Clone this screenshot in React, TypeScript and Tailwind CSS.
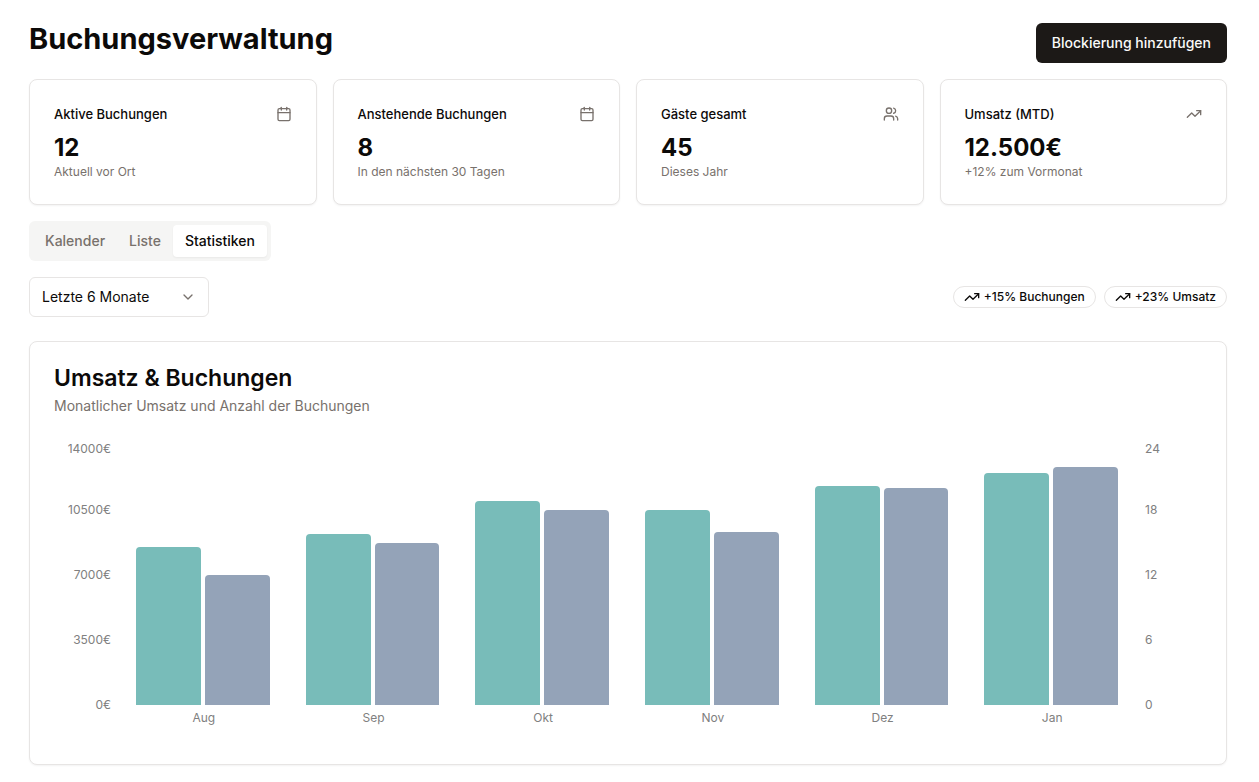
import React, { useState } from 'react';
import { Calendar, ChevronDown, TrendingUp, Users, type LucideIcon } from 'lucide-react';

interface Stat {
  title: string;
  value: string;
  hint: string;
  icon: LucideIcon;
}

interface MonthData {
  month: string;
  revenue: number;
  bookings: number;
}

const stats: Stat[] = [
  { title: 'Aktive Buchungen', value: '12', hint: 'Aktuell vor Ort', icon: Calendar },
  { title: 'Anstehende Buchungen', value: '8', hint: 'In den nächsten 30 Tagen', icon: Calendar },
  { title: 'Gäste gesamt', value: '45', hint: 'Dieses Jahr', icon: Users },
  { title: 'Umsatz (MTD)', value: '12.500€', hint: '+12% zum Vormonat', icon: TrendingUp },
];

const months: MonthData[] = [
  { month: 'Aug', revenue: 8500, bookings: 12 },
  { month: 'Sep', revenue: 9200, bookings: 15 },
  { month: 'Okt', revenue: 11000, bookings: 18 },
  { month: 'Nov', revenue: 10500, bookings: 16 },
  { month: 'Dez', revenue: 11800, bookings: 20 },
  { month: 'Jan', revenue: 12500, bookings: 22 },
];

const MAX_REVENUE = 14000;
const MAX_BOOKINGS = 24;

const tabs = ['Kalender', 'Liste', 'Statistiken'];
const trends = ['+15% Buchungen', '+23% Umsatz'];

const StatCard: React.FC<{ stat: Stat }> = ({ stat }) => {
  const Icon = stat.icon;
  return (
    <div className="rounded-lg border border-[#e7e5e4] bg-white p-6 shadow-xs">
      <div className="flex items-center justify-between pb-2">
        <h3 className="text-[13px] leading-5 font-medium">{stat.title}</h3>
        <Icon className="h-4 w-4 text-[#78716c]" />
      </div>
      <div className="text-2xl font-bold">{stat.value}</div>
      <p className="text-xs text-[#78716c]">{stat.hint}</p>
    </div>
  );
};

const Axis: React.FC<{ ticks: string[]; className: string }> = ({ ticks, className }) => (
  <div className={`flex w-[65px] shrink-0 flex-col pt-px ${className}`}>
    {ticks.map((tick) => (
      <div key={tick} className="h-[65px] first:h-[61px] last:h-4">{tick}</div>
    ))}
  </div>
);

const BookingsChart: React.FC = () => (
  <div className="flex h-[300px] text-xs text-[#808080]">
    <Axis ticks={['14000€', '10500€', '7000€', '3500€', '0€']} className="pr-2 text-right" />
    <div className="flex flex-1 pt-[5px]">
      {months.map((m) => (
        <div key={m.month} className="flex-1">
          <div className="flex h-[260px] items-end gap-1 pr-[19px] pl-[17px]">
            <div
              className="flex-1 rounded-t-[4px] bg-[#78bcb9]"
              style={{ height: `${(m.revenue / MAX_REVENUE) * 100}%` }}
            />
            <div
              className="flex-1 rounded-t-[4px] bg-[#94a3b8]"
              style={{ height: `${(m.bookings / MAX_BOOKINGS) * 100}%` }}
            />
          </div>
          <div className="pt-[5px] text-center">{m.month}</div>
        </div>
      ))}
    </div>
    <Axis ticks={['24', '18', '12', '6', '0']} className="pl-2" />
  </div>
);

export default function App() {
  const [activeTab, setActiveTab] = useState('Statistiken');
  const [range, setRange] = useState('6');

  return (
    <main className="min-h-screen bg-white pt-[23px] pr-8 pb-4 pl-[29px] font-['Inter',sans-serif] text-[#0c0a09]">
      <div className="mb-4 flex items-start justify-between">
        <h1 className="text-[29px] leading-8 font-bold">Buchungsverwaltung</h1>
        <button className="h-10 rounded-md bg-[#1c1917] px-4 text-sm font-medium text-[#fafaf9] hover:bg-[#292524]">
          Blockierung hinzufügen
        </button>
      </div>

      <div className="mb-4 grid grid-cols-4 gap-4">
        {stats.map((stat) => (
          <StatCard key={stat.title} stat={stat} />
        ))}
      </div>

      <div role="tablist" className="mb-4 flex h-10 w-fit items-center rounded-md bg-[#f5f5f4] p-1">
        {tabs.map((tab) => (
          <button
            key={tab}
            role="tab"
            aria-selected={activeTab === tab}
            onClick={() => setActiveTab(tab)}
            className={`h-8 rounded-sm px-3 text-sm font-medium ${
              activeTab === tab ? 'bg-white text-[#0c0a09] shadow-xs' : 'text-[#78716c]'
            }`}
          >
            {tab}
          </button>
        ))}
      </div>

      <div className="mb-6 flex items-center justify-between">
        <div className="relative w-[180px]">
          <select
            aria-label="Zeitraum"
            value={range}
            onChange={(e) => setRange(e.target.value)}
            className="h-10 w-full appearance-none rounded-md border border-[#e7e5e4] bg-white px-3 text-sm"
          >
            <option value="3">Letzte 3 Monate</option>
            <option value="6">Letzte 6 Monate</option>
            <option value="12">Letzte 12 Monate</option>
          </select>
          <ChevronDown className="pointer-events-none absolute top-3 right-[13px] h-4 w-4 text-[#78716c]" />
        </div>
        <div className="flex gap-2">
          {trends.map((trend) => (
            <div key={trend} className="flex items-center gap-1 rounded-full border border-[#e7e5e4] px-2.5 py-0.5 text-xs font-medium">
              <TrendingUp className="h-4 w-4" />
              {trend}
            </div>
          ))}
        </div>
      </div>

      <section className="rounded-lg border border-[#e7e5e4] bg-white p-6 shadow-xs">
        <h2 className="text-[23px] leading-6 font-semibold">Umsatz &amp; Buchungen</h2>
        <p className="mt-1.5 mb-6 text-sm text-[#78716c]">Monatlicher Umsatz und Anzahl der Buchungen</p>
        <BookingsChart />
      </section>
    </main>
  );
}
